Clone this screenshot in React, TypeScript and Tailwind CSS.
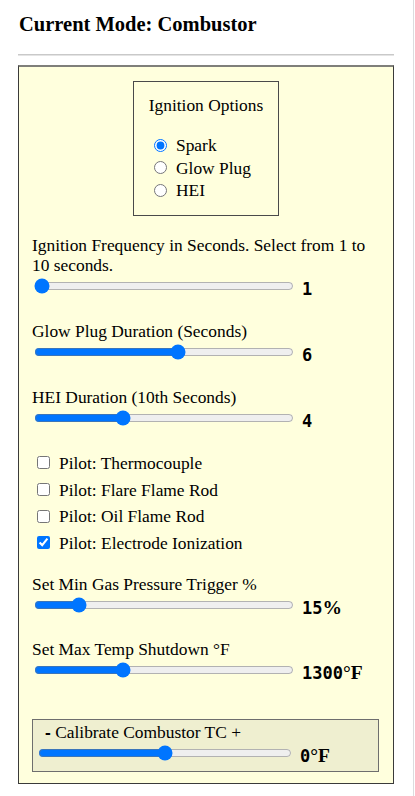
import { ReactNode } from "react"

const serif = "font-['Liberation_Serif',serif]"
const mono = "font-['DejaVu_Sans_Mono',monospace]"

const ignitionOptions = [
  { id: "spark", label: "Spark", checked: true },
  { id: "glow", label: "Glow Plug", checked: false },
  { id: "hei", label: "HEI", checked: false },
]

const pilots = [
  { id: "tc", label: "Pilot: Thermocouple", checked: false },
  { id: "flare", label: "Pilot: Flare Flame Rod", checked: false },
  { id: "oil", label: "Pilot: Oil Flame Rod", checked: false },
  { id: "ion", label: "Pilot: Electrode Ionization", checked: true },
]

function Slider({
  min,
  max,
  value,
  width,
  unit,
}: {
  min: number
  max: number
  value: number
  width: string
  unit?: ReactNode
}) {
  return (
    <div className="flex h-[22px] items-start">
      <div className="flex h-[22px] items-center">
        <input type="range" min={min} max={max} defaultValue={value} className={`${width} m-0 mx-[2px]`} />
      </div>
      <span className={`${mono} ml-[6px] mt-[3px] text-[17px] font-bold leading-[22px] text-black`}>
        {value}
        {unit && <span className={`${serif} text-[19.5px] font-bold`}>{unit}</span>}
      </span>
    </div>
  )
}

function Setting({ label, children }: { label: string; children: ReactNode }) {
  return (
    <div>
      <div className="leading-5">{label}</div>
      {children}
    </div>
  )
}

export default function App() {
  return (
    <div className={`${serif} min-h-screen w-[414px] border-r border-[#dcdcde] bg-white text-[17.4px] text-black`}>
      <div className="px-[18px] pt-[12px]">
        <h3 className="text-[20.5px] font-bold leading-[24px] pl-px">Current Mode: Combustor</h3>
        <div className="mt-[18px] h-[2px] w-[376px] border-t border-b border-t-[#c9c9c9] border-b-[#e4e4e4]" />

        <div className="mt-[9px] w-[376px] border border-[#3a3a3a] border-t-2 border-t-[#7f7f7a] bg-[#ffffdd] pb-[11px] pl-[13px] pr-[13px] pt-[14px]">
          <div className="mx-auto w-[146px] border border-[#4a4a4a] pb-[13px] pt-[13px]">
            <div className="text-center leading-5">Ignition Options</div>
            <div className="mt-[19px] pl-[15px]">
              {ignitionOptions.map((o) => (
                <label key={o.id} className="flex h-[22.5px] items-center">
                  <input type="radio" name="ignition" defaultChecked={o.checked} className="m-0 ml-[5px] mr-[9px] h-[13px] w-[13px]" />
                  <span className="leading-5">{o.label}</span>
                </label>
              ))}
            </div>
          </div>

          <div className="mt-[19px] flex flex-col gap-[24px]">
            <Setting label="Ignition Frequency in Seconds. Select from 1 to 10 seconds.">
              <Slider min={1} max={10} value={1} width="w-[260px]" />
            </Setting>
            <Setting label="Glow Plug Duration (Seconds)">
              <Slider min={1} max={10} value={6} width="w-[260px]" />
            </Setting>
            <Setting label="HEI Duration (10th Seconds)">
              <Slider min={1} max={10} value={4} width="w-[260px]" />
            </Setting>
          </div>

          <div className="mt-[21px]">
            {pilots.map((p) => (
              <label key={p.id} className="flex h-[26.7px] items-center">
                <input type="checkbox" defaultChecked={p.checked} className="m-0 ml-[5px] mr-[9px] h-[13px] w-[13px]" />
                <span className="leading-5">{p.label}</span>
              </label>
            ))}
          </div>

          <div className="mt-[18px] flex flex-col gap-[23px]">
            <Setting label="Set Min Gas Pressure Trigger %">
              <Slider min={0} max={100} value={15} width="w-[260px]" unit="%" />
            </Setting>
            <Setting label="Set Max Temp Shutdown °F">
              <Slider min={0} max={3900} value={1300} width="w-[260px]" unit="°F" />
            </Setting>
          </div>

          <div className="mt-[38px] w-[347px] border border-[#6e6e6e] bg-[#efefd0] pb-[7px] pl-[3px] pt-[2px]">
            <div className="pl-[9px] leading-5">
              <span className="font-['Liberation_Sans',sans-serif] font-bold">-</span> Calibrate Combustor TC +
            </div>
            <Slider min={-50} max={50} value={0} width="w-[254px]" unit="°F" />
          </div>
        </div>
      </div>
    </div>
  )
}
